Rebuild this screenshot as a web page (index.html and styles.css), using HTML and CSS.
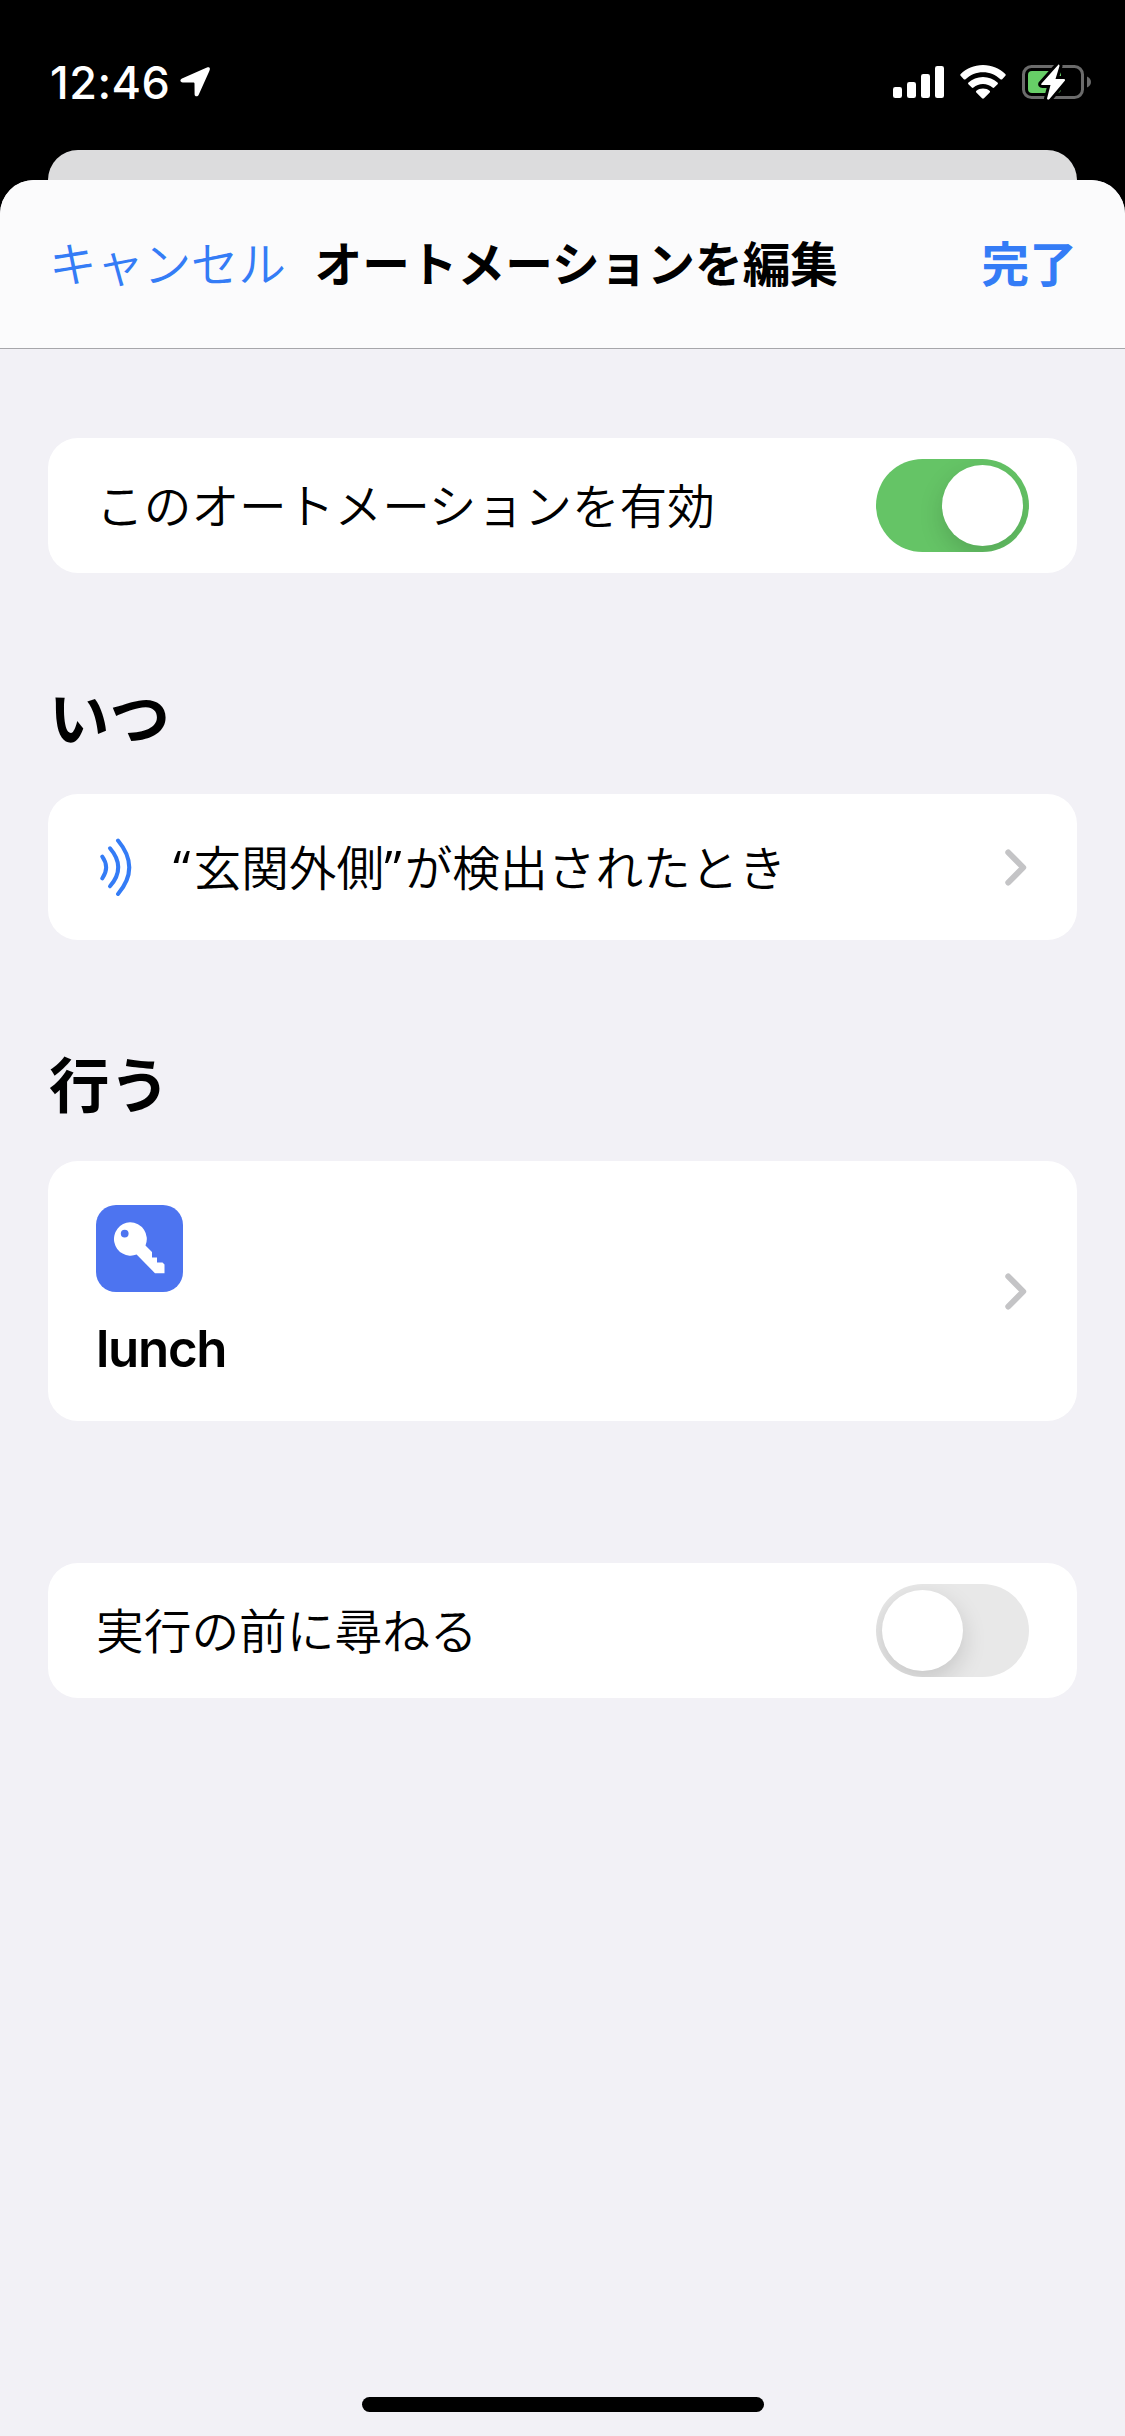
FILE: index.html
```html
<!DOCTYPE html>
<html lang="ja">
<head>
    <meta charset="UTF-8">
    <meta name="viewport" content="width=device-width, initial-scale=1.0">
    <title>オートメーションを編集</title>
    <link rel="stylesheet" href="styles.css">
</head>
<body>
    <!-- Status bar -->
    <div class="status-bar">
        <span class="time">12:46</span>
        <svg class="location" width="30" height="30" viewBox="0 0 30 30">
            <path d="M27.6 .3C29.2 -.3 30.2 .8 29.8 2.4C29.6 3.3 29.3 4.1 28.9 4.9L18.7 27.7C17.7 30 14.6 29.8 14.6 27.2L14.5 16.8C14.5 16 14.1 15.6 13.3 15.6L2.7 15.5C.1 15.4 -.5 12.6 2 11.4L25.2 1.2C26 .9 26.8 .6 27.6 .3Z" fill="#fff"/>
        </svg>
        <div class="status-icons">
            <svg width="51" height="32" viewBox="0 0 51 32" fill="#fff">
                <rect x="0" y="21" width="9" height="11" rx="2.3"/>
                <rect x="14" y="16" width="9" height="16" rx="2.3"/>
                <rect x="28" y="8" width="9" height="24" rx="2.3"/>
                <rect x="42" y="0" width="9" height="32" rx="2.3"/>
            </svg>
            <svg class="wifi" width="46" height="34" viewBox="0 0 46 34" fill="#fff">
                <path d="M23 0C32 0 39.700 3.500 45.300 9C45.900 9.600 45.900 10.200 45.400 10.800L42.200 14.200C41.700 14.700 41 14.700 40.400 14.200C35.700 9.800 29.700 7.200 23 7.200C16.300 7.200 10.300 9.800 5.600 14.200C5 14.700 4.300 14.700 3.800 14.200L.6 10.800C.1 10.200 .1 9.600 .7 9C6.300 3.500 14 0 23 0Z"/>
                <path d="M23 11.900C28.700 11.900 33.700 14 37.500 17.400C38.100 18 38.100 18.600 37.600 19.200L34.200 22.500C33.700 23 33.100 23 32.500 22.500C29.900 20.300 26.700 19 23 19C19.300 19 16.100 20.300 13.500 22.500C12.900 23 12.300 23 11.800 22.500L8.400 19.200C7.900 18.600 7.900 18 8.500 17.400C12.300 14 17.300 11.900 23 11.900Z"/>
                <path d="M23 23.600C25.600 23.600 27.800 24.400 29.600 25.800C30.200 26.300 30.200 26.900 29.700 27.400L24 33.200C23.400 33.800 22.600 33.800 22 33.200L16.300 27.400C15.800 26.900 15.800 26.300 16.400 25.800C18.200 24.400 20.400 23.600 23 23.600Z"/>
            </svg>
            <svg class="battery" width="70" height="38" viewBox="0 0 70 38">
                <rect x="1.500" y="3.500" width="59" height="31" rx="8" fill="none" stroke="#6b6b6b" stroke-width="3"/>
                <path d="M65 13.500C67.500 14.500 69 16.500 69 19S67.500 23.500 65 24.500Z" fill="#6b6b6b"/>
                <rect x="6" y="8" width="33" height="22" rx="4" fill="#67ce67"/>
                <path d="M36.500 1.500L19.500 20.500Q18.500 22 20.500 22H28.500L25 35.500Q25.500 37.500 27.500 36L43 17.500Q43.500 16 42 16H33.500L37.500 3Q37.500 1 36.500 1.500Z" fill="#fff" stroke="#000" stroke-width="6" paint-order="stroke"/>
            </svg>
        </div>
    </div>

    <div class="back-sheet"></div>

    <div class="sheet">
        <div class="nav">
            <span class="cancel">キャンセル</span>
            <h1>オートメーションを編集</h1>
            <span class="done">完了</span>
        </div>

        <div class="content">
            <div class="card toggle-row">
                <span class="label">このオートメーションを有効</span>
                <div class="switch on"><div class="knob"></div></div>
            </div>

            <h2>いつ</h2>
            <div class="card trigger-row">
                <svg class="nfc" width="32" height="58" viewBox="0 0 32 58" fill="none" stroke="#347cf6" stroke-width="4" stroke-linecap="round">
                    <path d="M2.300 18.700Q10 29.500 2.300 40.300"/>
                    <path d="M10 10.300Q26.500 29.500 10 48.300"/>
                    <path d="M18 2.500Q40.500 29.500 18 56"/>
                </svg>
                <span class="trigger-label"><span class="quote">“</span>玄関外側<span class="quote">”</span>が検出されたとき</span>
                <svg class="chevron" width="22" height="37" viewBox="0 0 22 37">
                    <path d="M3.300 3.500L18.200 18.500L3.300 33.500"/>
                </svg>
            </div>

            <h2>行う</h2>
            <div class="card action-row">
                <div class="shortcut">
                    <div class="shortcut-icon">
                        <svg width="52" height="52" viewBox="0 0 52 52">
                            <path fill="#fff" fill-rule="evenodd" d="M17 .3A16.700 16.700 0 0 1 32.500 23.500L39 30V35.500H44V40.500H49.500L51.500 42.500V51.200H42L23.600 32.600A16.700 16.700 0 1 1 17 .3ZM11.700 7.700A3.900 3.900 0 1 0 11.700 15.500A3.900 3.900 0 1 0 11.700 7.700Z"/>
                        </svg>
                    </div>
                    <span class="shortcut-name">lunch</span>
                </div>
                <svg class="chevron" width="22" height="37" viewBox="0 0 22 37">
                    <path d="M3.300 3.500L18.200 18.500L3.300 33.500"/>
                </svg>
            </div>

            <div class="card toggle-row ask-row">
                <span class="label">実行の前に尋ねる</span>
                <div class="switch"><div class="knob"></div></div>
            </div>
        </div>

        <div class="home-indicator"></div>
    </div>
</body>
</html>
```

FILE: styles.css
```css
* {
    box-sizing: border-box;
}
body {
    margin: 0;
    height: 2436px;
    display: flex;
    flex-direction: column;
    background-color: #000;
    color: #000;
    font-family: "Noto Sans CJK JP", sans-serif;
    font-size: 47.7px;
    font-weight: 350;
    line-height: 1;
    overflow: hidden;
}
svg {
    display: block;
    flex-shrink: 0;
}

/* Status bar */
.status-bar {
    height: 150px;
    padding: 14px 33px 0 50px;
    display: flex;
    align-items: center;
    color: #fff;
}
.time {
    width: 130px;
    font-family: Inter, sans-serif;
    font-size: 45px;
    font-weight: 500;
    letter-spacing: 0.5px;
    white-space: nowrap;
}
.status-icons {
    display: flex;
    align-items: center;
    margin-left: auto;
}
.wifi {
    margin-left: 16px;
}
.battery {
    margin-left: 16px;
}

/* Sheets */
.back-sheet {
    flex-shrink: 0;
    height: 30px;
    margin: 0 48px;
    border-radius: 30px 30px 0 0;
    background-color: #dcdcdd;
}
.sheet {
    flex: 1;
    display: flex;
    flex-direction: column;
    border-radius: 34px 34px 0 0;
    background-color: #f2f1f6;
    overflow: hidden;
}
.nav {
    height: 169px;
    padding: 0 48px 4px 49px;
    display: flex;
    align-items: center;
    background-color: #fbfbfc;
    border-bottom: 1px solid #a6a6aa;
}
.nav h1 {
    margin: 0 0 0 29px;
    font-size: 47.7px;
    font-weight: 700;
}
.cancel,
.done {
    color: #347cf6;
}
.cancel {
    letter-spacing: -0.4px;
}
.done {
    margin-left: auto;
    font-weight: 700;
}

/* Content */
.content {
    flex: 1;
    padding: 89px 48px 0;
}
.card {
    display: flex;
    align-items: center;
    padding: 0 48px;
    border-radius: 30px;
    background-color: #fff;
}
.toggle-row {
    height: 135px;
    justify-content: space-between;
}
.label {
    padding-bottom: 4px;
}
h2 {
    margin: 0;
    height: 221px;
    padding: 112px 0 0 1px;
    font-size: 60.5px;
    font-weight: 700;
    line-height: 60px;
}
.trigger-row {
    height: 146px;
}
.nfc {
    margin-left: 4px;
    margin-right: 41px;
}
.trigger-label {
    padding-bottom: 1px;
}
.quote {
    font-family: "Open Sans", sans-serif;
    font-size: 50px;
    font-weight: 500;
    letter-spacing: 3px;
}
.chevron {
    margin-left: auto;
    margin-right: 2px;
    fill: none;
    stroke: #c4c4c6;
    stroke-width: 6px;
    stroke-linecap: round;
    stroke-linejoin: round;
}
.action-row {
    height: 260px;
    padding-bottom: 3px;
}
.action-row .chevron {
    margin-top: 3px;
}
.shortcut-icon {
    width: 87px;
    height: 87px;
    padding: 0 1px 1px 0;
    display: flex;
    align-items: center;
    justify-content: center;
    border-radius: 20px;
    background-color: #4d74f0;
}
.shortcut-name {
    display: block;
    margin-top: 31px;
    font-family: Inter, sans-serif;
    font-size: 51px;
    font-weight: 600;
    letter-spacing: -1.3px;
}
.ask-row {
    margin-top: 142px;
}

/* Switch */
.switch {
    width: 153px;
    height: 93px;
    padding: 6px;
    display: flex;
    border-radius: 47px;
    background-color: #e8e8e8;
    overflow: hidden;
}
.switch.on {
    justify-content: flex-end;
    background-color: #65c466;
}
.knob {
    width: 81px;
    height: 81px;
    border-radius: 50%;
    background-color: #fff;
    box-shadow: 0 9px 24px rgba(0, 0, 0, 0.15);
}

.home-indicator {
    width: 402px;
    height: 15px;
    margin: 0 auto 24px;
    border-radius: 8px;
    background-color: #000;
}
```
